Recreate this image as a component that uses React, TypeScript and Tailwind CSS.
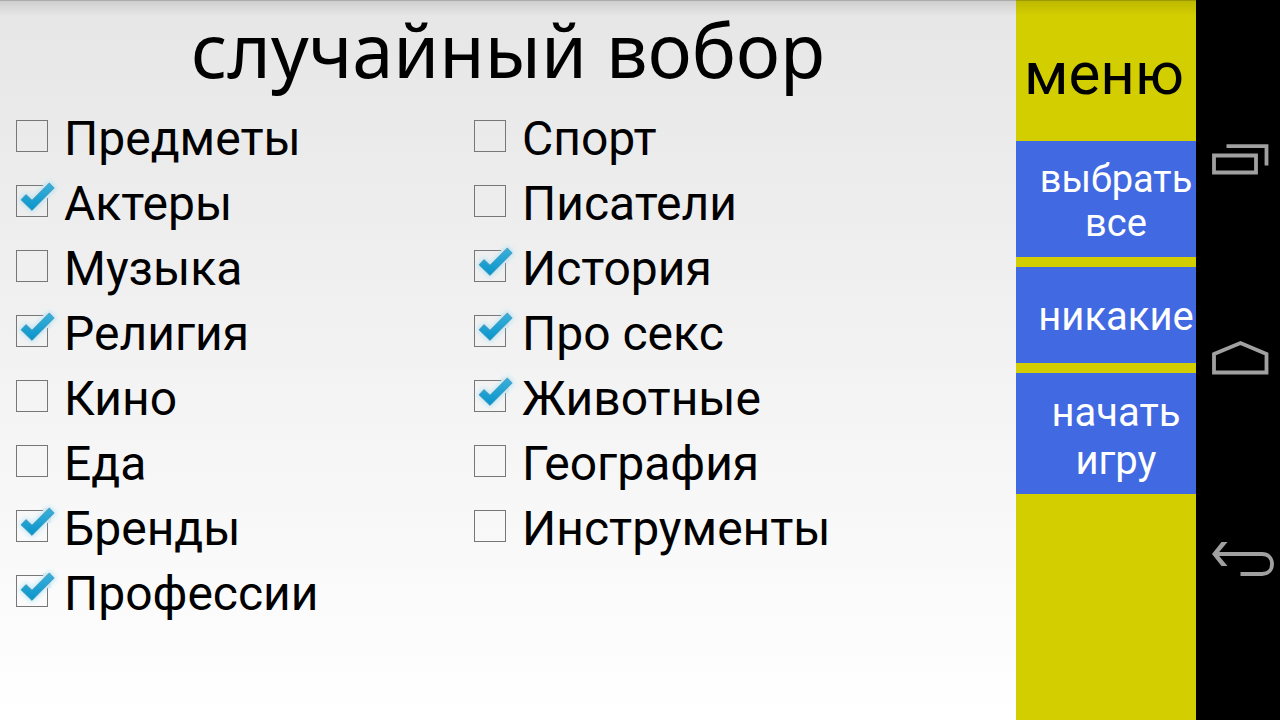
import { useState } from 'react'

const leftColumn = ['Предметы', 'Актеры', 'Музыка', 'Религия', 'Кино', 'Еда', 'Бренды', 'Профессии']
const rightColumn = ['Спорт', 'Писатели', 'История', 'Про секс', 'Животные', 'География', 'Инструменты']
const allCategories = [...leftColumn, ...rightColumn]

export default function App() {
  const [selected, setSelected] = useState<string[]>([
    'Актеры',
    'Религия',
    'Бренды',
    'Профессии',
    'История',
    'Про секс',
    'Животные',
  ])

  const toggle = (name: string) => {
    setSelected((prev) => (prev.includes(name) ? prev.filter((n) => n !== name) : [...prev, name]))
  }

  return (
    <div className="flex min-h-screen bg-black font-[Roboto,sans-serif] text-black">
      <div className="relative flex min-w-0 flex-1">
        {/* Categories */}
        <main className="min-w-0 flex-1 bg-gradient-to-b from-[#e6e6e6] to-white">
          <h1 className="pb-1 text-center font-['Noto_Sans',sans-serif] text-[74px] leading-[100px] whitespace-nowrap">
            случайный вобор
          </h1>
          <div className="grid grid-cols-2 pr-[84px] pl-4">
            {[leftColumn, rightColumn].map((column, i) => (
              <ul key={i}>
                {column.map((name) => (
                  <CategoryItem
                    key={name}
                    name={name}
                    checked={selected.includes(name)}
                    onChange={() => toggle(name)}
                  />
                ))}
              </ul>
            ))}
          </div>
        </main>

        {/* Menu */}
        <aside className="w-[180px] bg-[#d3ce00]">
          <h2 className="px-2 pt-[34px] pb-[27px] text-[60px] leading-[80px]">меню</h2>
          <div className="flex flex-col gap-[10px] text-white">
            <button
              className="bg-[#4169e1] pt-4 pb-3 pl-5 text-[38px] leading-[44px]"
              onClick={() => setSelected(allCategories)}
            >
              выбрать все
            </button>
            <button
              className="bg-[#4169e1] pt-[26px] pb-[22px] pl-5 text-[40px] leading-[48px]"
              onClick={() => setSelected([])}
            >
              никакие
            </button>
            <button className="bg-[#4169e1] pt-4 pb-[9px] pl-5 text-[40px] leading-[48px]">начать игру</button>
          </div>
        </aside>

        {/* Shadow along the top edge */}
        <div className="pointer-events-none absolute inset-x-0 top-0 h-4 border-t border-black/25 bg-gradient-to-b from-black/10 to-transparent" />
      </div>

      {/* System navigation */}
      <nav className="flex w-[84px] flex-col justify-around py-[60px] text-[#a0a0a0]">
        <button aria-label="Recent apps" className="flex h-12 items-center pl-4">
          <svg width="58" height="32" viewBox="0 0 58 32" fill="none" stroke="currentColor" strokeWidth="3.8">
            <path d="M2 11.5H44V28.5H2Z" />
            <path d="M14.5 2.2H54.5V21.5" />
          </svg>
        </button>
        <button aria-label="Home" className="flex h-12 items-center pl-4">
          <svg width="58" height="40" viewBox="0 0 58 40" fill="none" stroke="currentColor" strokeWidth="3.8">
            <path d="M2 14L28.5 3L54.5 14V32.5H2Z" />
          </svg>
        </button>
        <button aria-label="Back" className="flex h-12 items-center pl-4">
          <svg width="64" height="38" viewBox="0 0 64 38" fill="none" stroke="currentColor" strokeWidth="3.8">
            <path d="M3 13H50C56 13 60 17 60 23C60 29 56 33 50 33H28.5" />
            <path d="M9.5 1H15.5L5.5 13L15.5 25H9.5L0 13Z" fill="currentColor" stroke="none" />
          </svg>
        </button>
      </nav>
    </div>
  )
}

function CategoryItem({ name, checked, onChange }: { name: string; checked: boolean; onChange: () => void }) {
  return (
    <li>
      <label className="flex h-[65px] items-start gap-4 text-[48px] leading-[69px]">
        <span className="relative mt-4 shrink-0">
          <input
            type="checkbox"
            checked={checked}
            onChange={onChange}
            className="block size-8 appearance-none border border-[#777]"
          />
          {checked && <CheckMark />}
        </span>
        {name}
      </label>
    </li>
  )
}

function CheckMark() {
  return (
    <svg className="pointer-events-none absolute -top-2 left-0 h-10 w-12 overflow-visible" viewBox="0 0 48 40">
      <defs>
        <linearGradient id="tick" x1="0" y1="0" x2="0" y2="1">
          <stop offset="0" stopColor="#3bb0da" />
          <stop offset="1" stopColor="#0794cb" />
        </linearGradient>
        <filter id="glow" x="-40%" y="-40%" width="180%" height="180%">
          <feGaussianBlur stdDeviation="2.4" />
        </filter>
      </defs>
      <path d="M27 6H35V21H28Z" fill="#ebebeb" />
      <path
        d="M5 22.8L10 17.6L16 23.2L33.3 6L38.2 11L16 33.4Z"
        fill="#8fdcf8"
        stroke="#8fdcf8"
        strokeWidth="3"
        opacity="0.6"
        filter="url(#glow)"
      />
      <path
        d="M5 22.8L10 17.6L16 23.2L33.3 6L38.2 11L16 33.4Z"
        fill="url(#tick)"
        stroke="#4a93b0"
        strokeWidth="0.8"
      />
    </svg>
  )
}
